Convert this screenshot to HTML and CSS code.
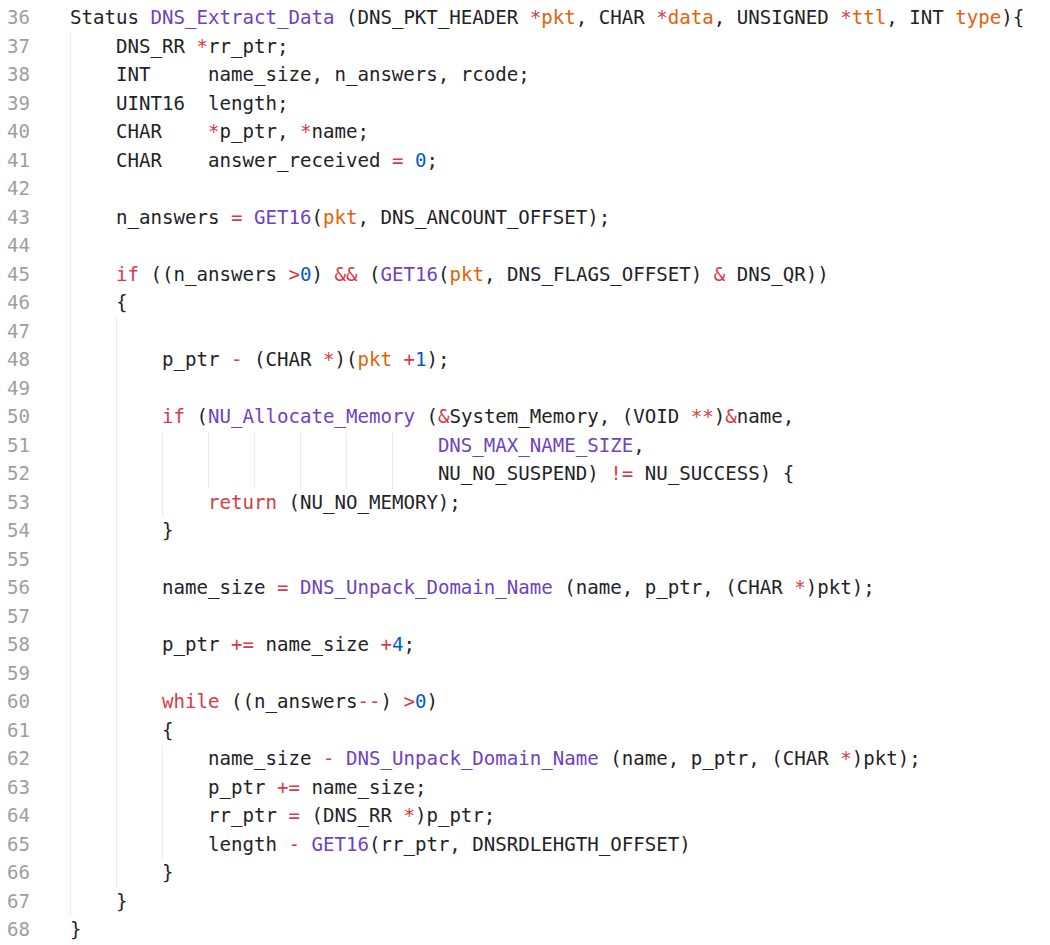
FILE: index.html
```html
<!DOCTYPE html>
<html>
<head>
<meta charset="utf-8">
<link rel="stylesheet" href="styles.css">
</head>
<body>
<div class="editor">
<div class="ln"><span class="num">36</span><span class="code">Status <span class="fn">DNS_Extract_Data</span> (DNS_PKT_HEADER <span class="op">*</span><span class="pa">pkt</span>, CHAR <span class="op">*</span><span class="pa">data</span>, UNSIGNED <span class="op">*</span><span class="pa">ttl</span>, INT <span class="pa">type</span>){</span></div>
<div class="ln"><span class="num">37</span><span class="code"><span class="g">    </span>DNS_RR <span class="op">*</span>rr_ptr;</span></div>
<div class="ln"><span class="num">38</span><span class="code"><span class="g">    </span>INT     name_size, n_answers, rcode;</span></div>
<div class="ln"><span class="num">39</span><span class="code"><span class="g">    </span>UINT16  length;</span></div>
<div class="ln"><span class="num">40</span><span class="code"><span class="g">    </span>CHAR    <span class="op">*</span>p_ptr, <span class="op">*</span>name;</span></div>
<div class="ln"><span class="num">41</span><span class="code"><span class="g">    </span>CHAR    answer_received <span class="op">=</span> <span class="nu">0</span>;</span></div>
<div class="ln"><span class="num">42</span><span class="code"><span class="g">    </span></span></div>
<div class="ln"><span class="num">43</span><span class="code"><span class="g">    </span>n_answers <span class="op">=</span> <span class="fn">GET16</span>(<span class="pa">pkt</span>, DNS_ANCOUNT_OFFSET);</span></div>
<div class="ln"><span class="num">44</span><span class="code"><span class="g">    </span></span></div>
<div class="ln"><span class="num">45</span><span class="code"><span class="g">    </span><span class="kw">if</span> ((n_answers <span class="op">&gt;</span><span class="nu">0</span>) <span class="op">&amp;&amp;</span> (<span class="fn">GET16</span>(<span class="pa">pkt</span>, DNS_FLAGS_OFFSET) <span class="op">&amp;</span> DNS_QR))</span></div>
<div class="ln"><span class="num">46</span><span class="code"><span class="g">    </span>{</span></div>
<div class="ln"><span class="num">47</span><span class="code"><span class="g">    </span><span class="g">    </span></span></div>
<div class="ln"><span class="num">48</span><span class="code"><span class="g">    </span><span class="g">    </span>p_ptr <span class="op">-</span> (CHAR <span class="op">*</span>)(<span class="pa">pkt</span> <span class="op">+</span><span class="nu">1</span>);</span></div>
<div class="ln"><span class="num">49</span><span class="code"><span class="g">    </span><span class="g">    </span></span></div>
<div class="ln"><span class="num">50</span><span class="code"><span class="g">    </span><span class="g">    </span><span class="kw">if</span> (<span class="fn">NU_Allocate_Memory</span> (<span class="op">&amp;</span>System_Memory, (VOID <span class="op">**</span>)<span class="op">&amp;</span>name,</span></div>
<div class="ln"><span class="num">51</span><span class="code"><span class="g">    </span><span class="g">    </span><span class="g">    </span><span class="g">    </span><span class="g">    </span><span class="g">    </span><span class="g">    </span><span class="g">    </span><span class="fn">DNS_MAX_NAME_SIZE</span>,</span></div>
<div class="ln"><span class="num">52</span><span class="code"><span class="g">    </span><span class="g">    </span><span class="g">    </span><span class="g">    </span><span class="g">    </span><span class="g">    </span><span class="g">    </span><span class="g">    </span>NU_NO_SUSPEND) <span class="op">!=</span> NU_SUCCESS) {</span></div>
<div class="ln"><span class="num">53</span><span class="code"><span class="g">    </span><span class="g">    </span><span class="g">    </span><span class="kw">return</span> (NU_NO_MEMORY);</span></div>
<div class="ln"><span class="num">54</span><span class="code"><span class="g">    </span><span class="g">    </span>}</span></div>
<div class="ln"><span class="num">55</span><span class="code"><span class="g">    </span><span class="g">    </span></span></div>
<div class="ln"><span class="num">56</span><span class="code"><span class="g">    </span><span class="g">    </span>name_size <span class="op">=</span> <span class="fn">DNS_Unpack_Domain_Name</span> (name, p_ptr, (CHAR <span class="op">*</span>)pkt);</span></div>
<div class="ln"><span class="num">57</span><span class="code"><span class="g">    </span><span class="g">    </span></span></div>
<div class="ln"><span class="num">58</span><span class="code"><span class="g">    </span><span class="g">    </span>p_ptr <span class="op">+=</span> name_size <span class="op">+</span><span class="nu">4</span>;</span></div>
<div class="ln"><span class="num">59</span><span class="code"><span class="g">    </span><span class="g">    </span></span></div>
<div class="ln"><span class="num">60</span><span class="code"><span class="g">    </span><span class="g">    </span><span class="kw">while</span> ((n_answers<span class="op">--</span>) <span class="op">&gt;</span><span class="nu">0</span>)</span></div>
<div class="ln"><span class="num">61</span><span class="code"><span class="g">    </span><span class="g">    </span>{</span></div>
<div class="ln"><span class="num">62</span><span class="code"><span class="g">    </span><span class="g">    </span><span class="g">    </span>name_size <span class="op">-</span> <span class="fn">DNS_Unpack_Domain_Name</span> (name, p_ptr, (CHAR <span class="op">*</span>)pkt);</span></div>
<div class="ln"><span class="num">63</span><span class="code"><span class="g">    </span><span class="g">    </span><span class="g">    </span>p_ptr <span class="op">+=</span> name_size;</span></div>
<div class="ln"><span class="num">64</span><span class="code"><span class="g">    </span><span class="g">    </span><span class="g">    </span>rr_ptr <span class="op">=</span> (DNS_RR <span class="op">*</span>)p_ptr;</span></div>
<div class="ln"><span class="num">65</span><span class="code"><span class="g">    </span><span class="g">    </span><span class="g">    </span>length <span class="op">-</span> <span class="fn">GET16</span>(rr_ptr, DNSRDLEHGTH_OFFSET)</span></div>
<div class="ln"><span class="num">66</span><span class="code"><span class="g">    </span><span class="g">    </span>}</span></div>
<div class="ln"><span class="num">67</span><span class="code"><span class="g">    </span>}</span></div>
<div class="ln"><span class="num">68</span><span class="code">}</span></div>
</div>
</body>
</html>
```
FILE: styles.css
```css
html, body {
  margin: 0;
  padding: 0;
  background: #ffffff;
}
body {
  width: 1050px;
  height: 945px;
  overflow: hidden;
}
.editor {
  padding-top: 4.4px;
  font-family: "DejaVu Sans Mono", "Liberation Mono", monospace;
  font-size: 19.1px;
  line-height: 28.5px;
  color: #1f2328;
}
.ln {
  display: flex;
  height: 28.5px;
  white-space: pre;
}
.num {
  width: 30px;
  text-align: right;
  color: #9e9e9e;
  flex: none;
}
.code {
  margin-left: 40px;
  white-space: pre;
}
.g {
  display: inline-block;
  box-shadow: inset 1px 0 0 #ebebf0;
}
.fn { color: #6f42c1; }
.kw { color: #d73a49; }
.op { color: #d73a49; }
.pa { color: #e36209; }
.nu { color: #005cc5; }
```
